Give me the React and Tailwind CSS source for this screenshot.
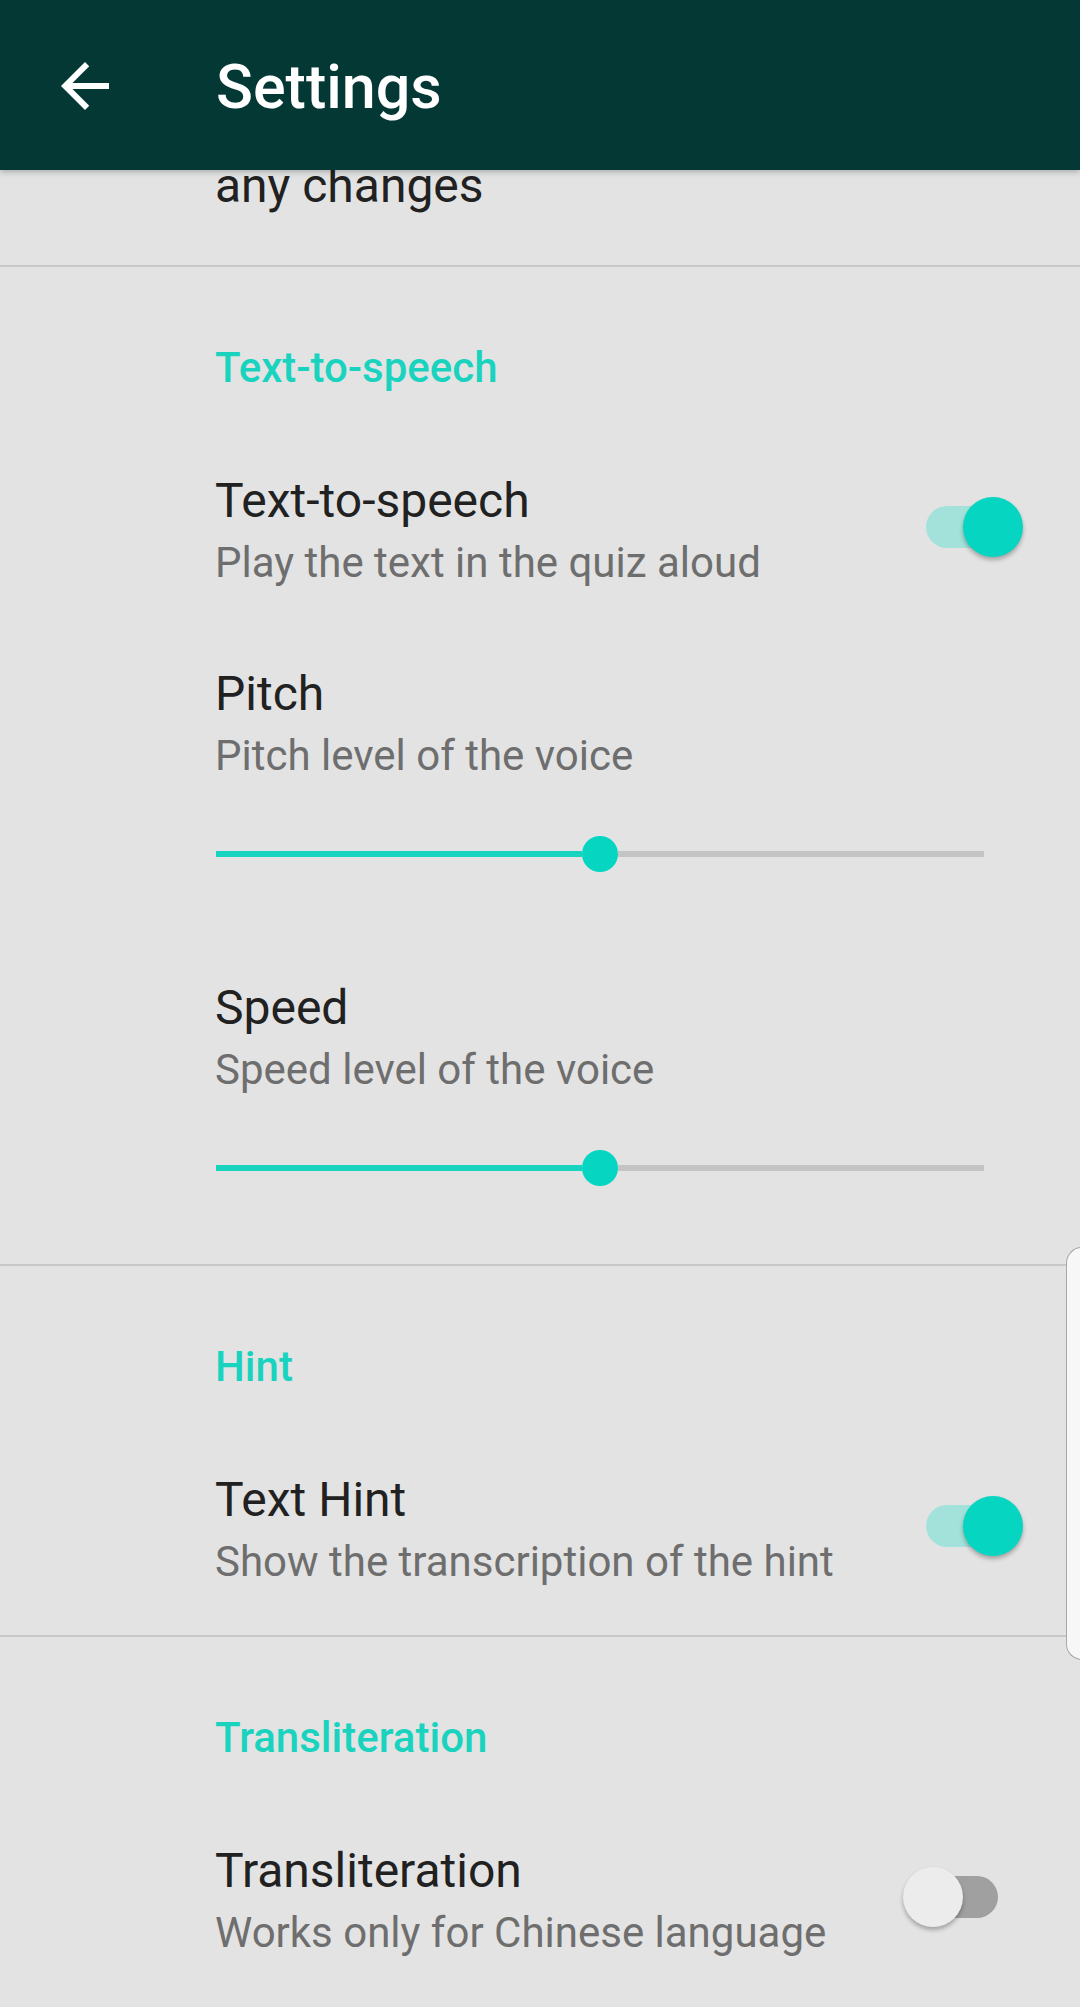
import React from 'react'

const BackArrow = () => (
    <svg width="72" height="72" viewBox="0 0 24 24" fill="#ffffff">
        <path d="M20 11H7.83l5.59-5.59L12 4l-8 8 8 8 1.41-1.41L7.83 13H20v-2z" />
    </svg>
)

const Toggle = ({ on }) => (
    <div className="relative w-[120px] h-[62px] shrink-0 mt-[23px] mr-[57px]">
        <div className={`absolute left-[23px] top-[10px] w-[72px] h-[42px] rounded-full ${on ? 'bg-[#a3e2da]' : 'bg-[#a0a0a0]'}`} />
        <div
            className={`absolute top-[1px] w-[60px] h-[60px] rounded-full shadow-[0_3px_4px_rgba(0,0,0,0.28)] ${on ? 'left-[60px] bg-[#06d6c1]' : 'left-0 bg-[#ececec]'}`}
        />
    </div>
)

const Slider = () => (
    <div className="flex items-center h-[36px] ml-[1px] mr-[96px] mt-[52px]">
        <div className="w-[366px] h-[6px] bg-[#17d3bf]" />
        <div className="w-[36px] h-[36px] rounded-full bg-[#06d6c1] shrink-0" />
        <div className="flex-1 h-[6px] bg-[#c4c4c4]" />
    </div>
)

const Category = ({ children }) => (
    <div className="pt-[73px] text-[42px] leading-[56px] font-medium text-[#1ad3bf]">
        {children}
    </div>
)

const ItemText = ({ title, summary }) => (
    <div className="flex-1">
        <div className="text-[48px] leading-[56px] text-[#212121]">{title}</div>
        <div className="mt-[6px] text-[42px] leading-[56px] text-[#6e6e6e]">{summary}</div>
    </div>
)

const SwitchItem = ({ title, summary, on }) => (
    <div className="flex items-start mt-[77px]">
        <ItemText title={title} summary={summary} />
        <Toggle on={on} />
    </div>
)

const SliderItem = ({ title, summary, first }) => (
    <div className={first ? 'mt-[75px]' : 'mt-[108px]'}>
        <ItemText title={title} summary={summary} />
        <Slider />
    </div>
)

export default function App() {
    return (
        <div className="relative min-h-screen bg-[#e3e3e3] font-['Roboto',sans-serif] overflow-hidden">

            <header className="sticky top-0 z-10 h-[170px] bg-[#033835] flex items-center shadow-[0_2px_6px_rgba(0,0,0,0.25)]">
                <div className="ml-[49px] mt-[2px]">
                    <BackArrow />
                </div>
                <h1 className="ml-[95px] mt-[5px] text-[61px] font-medium text-white leading-none">Settings</h1>
            </header>

            {/* tail of the previous preference, scrolled under the toolbar */}
            <div className="h-[97px] border-b-2 border-[#c8c8c8] overflow-hidden pl-[215px]">
                <div className="-mt-[12px] text-[48px] leading-[56px] text-[#212121]">any changes</div>
            </div>

            <section className="pl-[215px] pb-[78px] border-b-2 border-[#c8c8c8]">
                <Category>Text-to-speech</Category>
                <SwitchItem title="Text-to-speech" summary="Play the text in the quiz aloud" on />
                <SliderItem title="Pitch" summary="Pitch level of the voice" first />
                <SliderItem title="Speed" summary="Speed level of the voice" />
            </section>

            <section className="pl-[215px] pb-[45px] border-b-2 border-[#c8c8c8]">
                <Category>Hint</Category>
                <SwitchItem title="Text Hint" summary="Show the transcription of the hint" on />
            </section>

            <section className="pl-[215px]">
                <Category>Transliteration</Category>
                <SwitchItem title="Transliteration" summary="Works only for Chinese language" on={false} />
            </section>

            {/* edge panel handle */}
            <div className="absolute left-[1066px] top-[1247px] w-[30px] h-[413px] rounded-l-[16px] border border-r-0 border-[#a9a9a9] bg-[#f7f7f7]" />
        </div>
    )
}
